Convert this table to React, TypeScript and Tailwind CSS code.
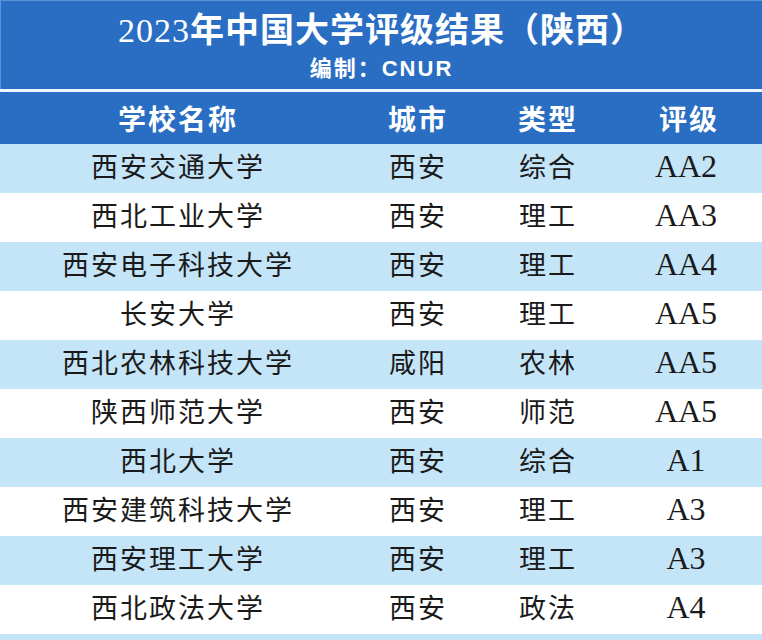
import React from 'react';

interface Row {
    name: string;
    city: string;
    type: string;
    grade: string;
}

const rows: Row[] = [
    { name: '西安交通大学', city: '西安', type: '综合', grade: 'AA2' },
    { name: '西北工业大学', city: '西安', type: '理工', grade: 'AA3' },
    { name: '西安电子科技大学', city: '西安', type: '理工', grade: 'AA4' },
    { name: '长安大学', city: '西安', type: '理工', grade: 'AA5' },
    { name: '西北农林科技大学', city: '咸阳', type: '农林', grade: 'AA5' },
    { name: '陕西师范大学', city: '西安', type: '师范', grade: 'AA5' },
    { name: '西北大学', city: '西安', type: '综合', grade: 'A1' },
    { name: '西安建筑科技大学', city: '西安', type: '理工', grade: 'A3' },
    { name: '西安理工大学', city: '西安', type: '理工', grade: 'A3' },
    { name: '西北政法大学', city: '西安', type: '政法', grade: 'A4' },
];

const serif = 'font-["Liberation_Serif","Noto_Sans_CJK_SC",serif]';
const cols = 'grid grid-cols-[356px_124px_136px_1fr] items-center';

export default function App() {
    return (
        <div className="w-[762px] h-[640px] overflow-hidden bg-white">
            <header className="h-[89px] bg-[#2a6ec4] border-t border-l border-[#5b93d8] flex flex-col items-center text-white">
                <h1 className={`${serif} mt-[9px] text-[34px] leading-[42px] font-semibold tracking-[1px]`}>
                    <span className="font-normal">2023</span>年中国大学评级结果（陕西）
                </h1>
                <p className='font-["Liberation_Sans","Noto_Sans_CJK_SC",sans-serif] mt-[3px] text-[22px] leading-[28px] font-bold tracking-[2px]'>
                    编制：CNUR
                </p>
            </header>
            <div className="h-[3px] bg-[#eef5fc]" />
            <div className={`${cols} h-[52px] bg-[#2a6ec4] text-white font-["Noto_Sans_CJK_SC",sans-serif] text-[28px] font-bold tracking-[2px] text-center`}>
                <span>学校名称</span>
                <span>城市</span>
                <span>类型</span>
                <span>评级</span>
            </div>
            {rows.map((r, i) => (
                <div
                    key={r.name}
                    className={`${cols} h-[49px] ${i % 2 === 0 ? 'bg-[#c4e4f8]' : 'bg-white'} ${serif} text-[27px] tracking-[2px] text-[#1a1a1a] text-center`}
                >
                    <span>{r.name}</span>
                    <span>{r.city}</span>
                    <span>{r.type}</span>
                    <span className="text-[32px] leading-none tracking-normal pr-[6px] pb-[5px]">{r.grade}</span>
                </div>
            ))}
            <div className="h-[49px] bg-[#c4e4f8]" />
        </div>
    );
}
